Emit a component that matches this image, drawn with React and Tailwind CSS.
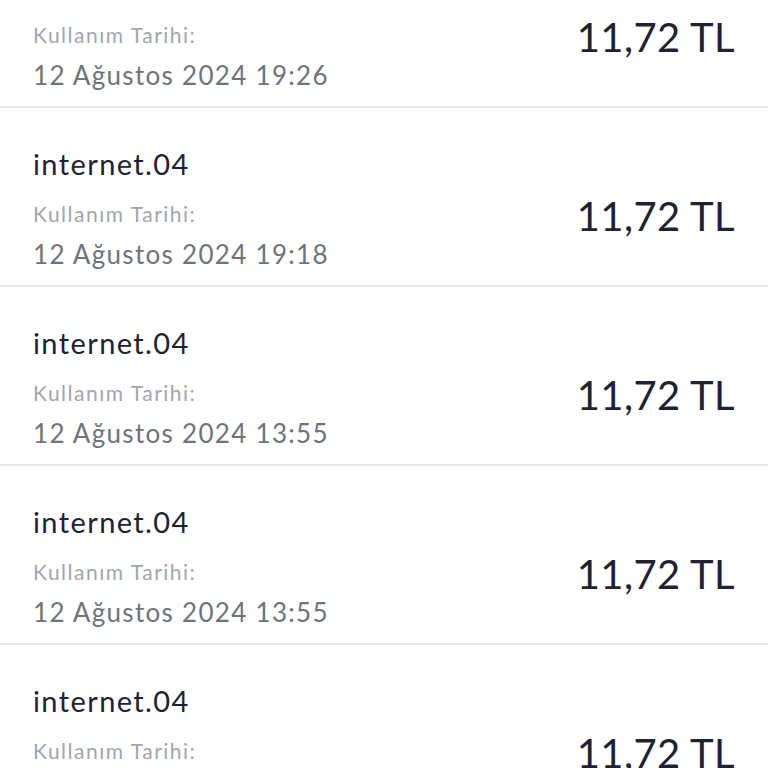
import React from 'react';

const usages = [
    { name: 'internet.04', date: '12 Ağustos 2024 19:26', amount: '11,72 TL' },
    { name: 'internet.04', date: '12 Ağustos 2024 19:18', amount: '11,72 TL' },
    { name: 'internet.04', date: '12 Ağustos 2024 13:55', amount: '11,72 TL' },
    { name: 'internet.04', date: '12 Ağustos 2024 13:55', amount: '11,72 TL' },
    { name: 'internet.04', date: '12 Ağustos 2024 13:40', amount: '11,72 TL' },
];

function UsageRow({ item }) {
    return (
        <div className="flex justify-between border-b-2 border-[#e6e7ea] px-[33px]">
            <div className="flex flex-col pt-[38px] pb-[14px]">
                <div className="text-[29px] leading-[36px] tracking-[1.4px] text-[#1e2231]">{item.name}</div>
                <div className="mt-[18px] text-[21px] leading-[28px] tracking-[1.5px] text-[#a3a6ad]">Kullanım Tarihi:</div>
                <div className="mt-[9px] text-[26px] leading-[34px] tracking-[1.3px] text-[#6f737b]">{item.date}</div>
            </div>
            <div className="pt-[84px] text-[40px] leading-[48px] tracking-[0.4px] text-[#1e2231]">{item.amount}</div>
        </div>
    );
}

export default function App() {
    return (
        <div className="h-[768px] w-[768px] overflow-hidden bg-white" style={{ fontFamily: 'Lato, "Open Sans", sans-serif' }}>
            <div className="-mt-[71px]">
                {usages.map((item, i) => (
                    <UsageRow key={i} item={item} />
                ))}
            </div>
        </div>
    );
}
